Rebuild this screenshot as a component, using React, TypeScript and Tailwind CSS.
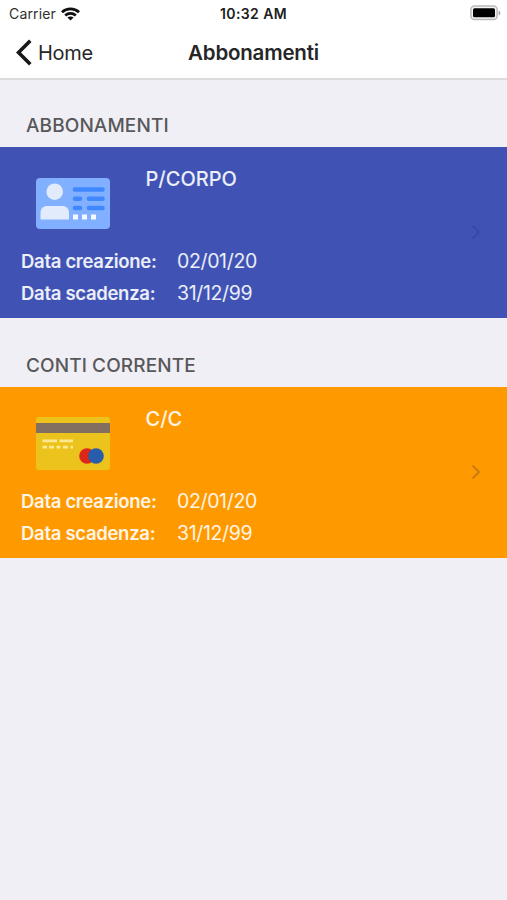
import React from 'react';

function IdCardIcon() {
  return (
    <svg width="74" height="51" viewBox="0 0 74 51" className="mt-[30.500px] block">
      <rect width="74" height="51" rx="4" fill="#80b0ff" />
      <circle cx="18.7" cy="13.7" r="8.3" fill="#e1ebfc" />
      <path d="M4.500 41.500V35c0-4.500 2.600-7 7-7h14.500c4.400 0 7 2.500 7 7v6.500z" fill="#e1ebfc" />
      <g stroke="#4088ff" strokeWidth="4.600" strokeLinecap="round">
        <path d="M39 11.500H66.500M39 20.700H44M53 20.700H66.500M39 30H44M53 30H66.500" />
      </g>
      <path d="M37 36.500h5v5h-5zM46 36.500h5v5h-5zM55 36.500h5v5h-5z" fill="#f5f9ff" />
    </svg>
  );
}

function CreditCardIcon() {
  return (
    <svg width="74" height="53" viewBox="0 0 74 53" className="mt-[29.500px] block">
      <rect width="74" height="53" rx="3" fill="#ecc31c" />
      <rect y="6" width="74" height="10" fill="#826f60" />
      <path d="M6.500 23.900H21M23.500 23.900H37" stroke="#fbe98f" strokeWidth="2.900" />
      <path d="M6.500 30.200H11M13 30.200H18M20.500 30.200H24.500M27 30.200H32M34.500 30.200H37" stroke="#fbe98f" strokeWidth="2.800" />
      <circle cx="51" cy="39" r="7.800" fill="#dc2618" />
      <circle cx="60" cy="39" r="7.800" fill="#285dab" />
    </svg>
  );
}

function DateRow({ label, value }: { label: string; value: string }) {
  return (
    <div className="flex h-8 items-center whitespace-nowrap text-white/90">
      <span className="w-[156px] text-[18.5px] font-semibold tracking-[-0.3px]">{label}</span>
      <span className="text-[19.5px] tracking-[-0.35px]">{value}</span>
    </div>
  );
}

type SectionProps = {
  heading: string;
  title: string;
  color: string;
  headingHeight: string;
  chevron: string;
  icon: React.ReactNode;
};

function Section({ heading, title, color, headingHeight, chevron, icon }: SectionProps) {
  return (
    <section>
      <h2 className={`${headingHeight} flex items-end pb-2 pl-[26px] text-[19px] leading-[27px] font-medium tracking-[0.1px] text-[#58585a]`}>
        {heading}
      </h2>
      <div className={`${color} flex h-[171px] items-center justify-between`}>
        <div className="h-full pl-[21px]">
          <div className="flex h-[99px] pl-[15px]">
            <div className="w-[109.500px]">{icon}</div>
            <div className="pt-[18px] text-[20px] leading-7 font-medium text-white/90">{title}</div>
          </div>
          <DateRow label="Data creazione:" value="02/01/20" />
          <DateRow label="Data scadenza:" value="31/12/99" />
        </div>
        <svg width="10" height="16" viewBox="0 0 10 16" className={`${chevron} mr-[26px] mb-px`}>
          <path d="M1.500 1.500L8 8L1.500 14.500" fill="none" stroke="currentColor" strokeWidth="2" />
        </svg>
      </div>
    </section>
  );
}

export default function App() {
  return (
    <div className="flex h-[900px] w-full flex-col overflow-hidden bg-[#f0eff5] font-['Inter','Liberation_Sans',sans-serif]">
      <header className="h-20 border-b-2 border-[#dcdcdf] bg-white">
        <div className="grid h-[27px] grid-cols-3 items-center pr-[6px] pl-[9px] text-[#202020]">
          <div className="flex items-center gap-[5px]">
            <span className="text-[14px] tracking-[0.15px] text-[#303030]">Carrier</span>
            <svg width="19" height="14" viewBox="0 0 19 14">
              <g fill="none" stroke="#101010" strokeWidth="2.800">
                <path d="M1 5.200C5.700.7 13.300.7 18 5.200" />
                <path d="M4.200 8.500C7.200 5.700 11.800 5.700 14.800 8.500" />
              </g>
              <path d="M6.400 10.500C8.200 9 10.800 9 12.600 10.500L9.500 13.500z" fill="#101010" />
            </svg>
          </div>
          <span className="pr-[3px] text-center text-[14px] font-semibold tracking-[0.4px]">10:32 AM</span>
          <svg width="31" height="16" viewBox="0 0 31 16" className="mb-px justify-self-end">
            <rect x=".9" y="1" width="26.200" height="13.500" rx="3.500" fill="#f3f3f3" stroke="#b9b9b9" strokeWidth="1.500" />
            <rect x="3" y="3.300" width="22" height="9" rx="1.500" fill="#000" />
            <path d="M28.600 5.500C31 6.500 31 9.500 28.600 10.500z" fill="#a5a5a5" />
          </svg>
        </div>
        <div className="grid h-[51px] grid-cols-3 items-center pr-4 pl-4 text-[#262628]">
          <div className="flex items-center gap-[6px]">
            <svg width="16" height="27" viewBox="0 0 16 27">
              <path d="M14.300 1.800L2.500 13.500L14.300 25.200" fill="none" stroke="#181818" strokeWidth="3.600" />
            </svg>
            <span className="text-[20px] tracking-[-0.3px]">Home</span>
          </div>
          <h1 className="pt-px text-center text-[20.500px] font-semibold tracking-[-0.2px]">Abbonamenti</h1>
        </div>
      </header>
      <main>
        <Section
          heading="ABBONAMENTI"
          title="P/CORPO"
          color="bg-[#4053b5]"
          headingHeight="h-[67px]"
          chevron="text-[#384aa3]"
          icon={<IdCardIcon />}
        />
        <Section
          heading="CONTI CORRENTE"
          title="C/C"
          color="bg-[#ff9900]"
          headingHeight="h-[69px]"
          chevron="text-[#c97c0e]"
          icon={<CreditCardIcon />}
        />
      </main>
    </div>
  );
}
